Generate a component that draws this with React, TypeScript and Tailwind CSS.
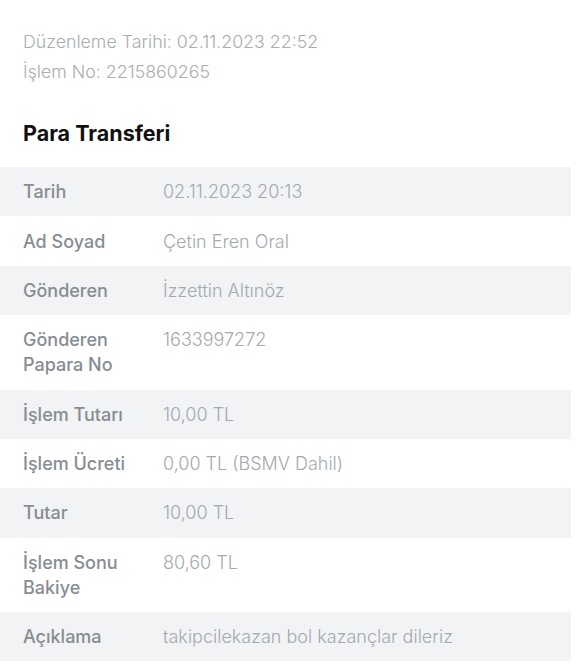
import React from "react";

const rows = [
    { label: "Tarih", value: "02.11.2023 20:13" },
    { label: "Ad Soyad", value: "Çetin Eren Oral" },
    { label: "Gönderen", value: "İzzettin Altınöz" },
    { label: "Gönderen Papara No", value: "1633997272" },
    { label: "İşlem Tutarı", value: "10,00 TL" },
    { label: "İşlem Ücreti", value: "0,00 TL (BSMV Dahil)" },
    { label: "Tutar", value: "10,00 TL" },
    { label: "İşlem Sonu Bakiye", value: "80,60 TL" },
    { label: "Açıklama", value: "takipcilekazan bol kazançlar dileriz" },
];

export default function App() {
    return (
        <div
            className="w-[584px] h-[664px] bg-white overflow-hidden"
            style={{ fontFamily: "Inter, 'Noto Sans', sans-serif" }}
        >
            <div className="w-[571px]">
                <div className="pl-[23px] pt-[27px] text-[17.8px] leading-[30px] text-[#a9adb1] font-light">
                    <p>Düzenleme Tarihi: 02.11.2023 22:52</p>
                    <p>İşlem No: 2215860265</p>
                </div>
                <h1 className="pl-[23px] mt-[33px] text-[21.5px] leading-[26px] font-bold text-[#111]">
                    Para Transferi
                </h1>
                <div className="mt-[21px]">
                    {rows.map((row, i) => (
                        <div
                            key={row.label}
                            className={`flex px-[23px] py-[12.2px] leading-[25px] ${
                                i % 2 === 0 ? "bg-[#f1f3f5]" : "bg-white"
                            }`}
                        >
                            <div className="w-[140px] shrink-0 pr-2 text-[18px] font-medium text-[#878c92]">
                                {row.label}
                            </div>
                            <div className="text-[18px] font-light text-[#a4a9ae]">
                                {row.value}
                            </div>
                        </div>
                    ))}
                </div>
            </div>
        </div>
    );
}
